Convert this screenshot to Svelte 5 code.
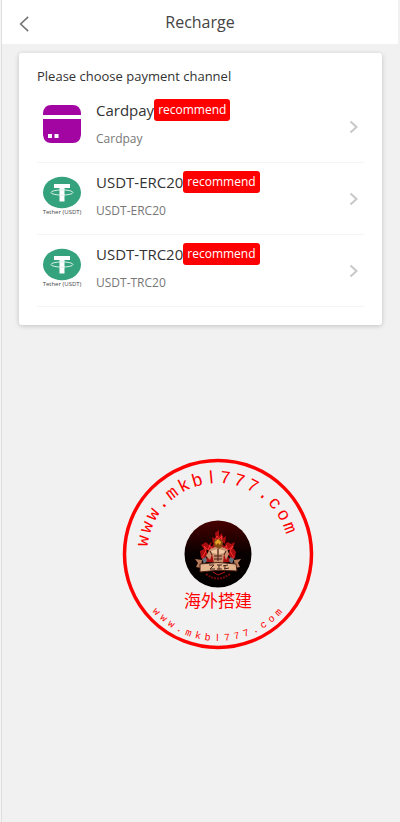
<script>
	const channels = [
		{ name: 'Cardpay', detail: 'Cardpay', icon: 'card' },
		{ name: 'USDT-ERC20', detail: 'USDT-ERC20', icon: 'tether' },
		{ name: 'USDT-TRC20', detail: 'USDT-TRC20', icon: 'tether' }
	];

	const site = [...'www.mkbl777.com'];

	// angles in degrees, measured from the vertical axis of the stamp
	const upper = site.map((char, i) => ({ char, angle: -80 + i * 10.7 }));
	const lower = site.map((char, i) => ({ char, angle: 47 - i * 6.65 }));
</script>

<div class="page">
	<header>
		<button class="back" aria-label="Back">
			<svg viewBox="0 0 12 20" width="12" height="20"><path d="M11 1.500 2 10l9 8.500" /></svg>
		</button>
		<h1>Recharge</h1>
	</header>

	<main>
		<section class="card">
			<h2>Please choose payment channel</h2>
			{#each channels as channel}
				<a class="channel" href="#{channel.name}">
					{#if channel.icon === 'card'}
						<svg class="icon" viewBox="0 0 40 40" width="40" height="40">
							<path d="M1 11V9Q2 1 9 1H31Q38 1 39 9V11Z" fill="#a305a3" />
							<path d="M1 15H39V31Q38 39 31 39H9Q2 39 1 31Z" fill="#a305a3" />
							<path d="M6 30h4v4H6zM12.500 30h4v4h-4z" fill="#fff" />
						</svg>
					{:else}
						<svg class="icon" viewBox="0 0 40 40" width="40" height="40">
							<ellipse cx="20" cy="16.500" rx="19" ry="15.800" fill="#34a27d" />
							<path d="M12 8h16v4h-5.500v13.500h-5V12H12z" fill="#fff" />
							<ellipse cx="20" cy="16.500" rx="11" ry="2.600" fill="none" stroke="#d9f1e9" />
							<text x="20" y="38">Tether (USDT)</text>
						</svg>
					{/if}
					<span class="info">
						<span class="name">{channel.name}<span class="tag">recommend</span></span>
						<span class="detail">{channel.detail}</span>
					</span>
					<svg class="arrow" viewBox="0 0 10 14" width="10" height="14"><path d="m1.500 1.500 6 5.500-6 5.500" /></svg>
				</a>
			{/each}
		</section>

		<svg class="stamp" viewBox="-96 -96 192 192" width="192" height="192">
			<defs>
				<linearGradient id="night" x1="0" y1="0" x2="0" y2="1">
					<stop offset="0" stop-color="#480000" />
					<stop offset=".5" stop-color="#080000" />
					<stop offset="1" stop-color="#000" />
				</linearGradient>
			</defs>
			<circle r="93.500" fill="none" stroke="#f00" stroke-width="3.500" />
			{#each upper as { char, angle }}
				<text class="upper" class:bar={char === 'l'} y="-71" transform="rotate({angle})">{char}</text>
			{/each}
			{#each lower as { char, angle }}
				<text class="lower" class:bar={char === 'l'} y="87" transform="rotate({angle})">{char}</text>
			{/each}

			<circle r="33.500" fill="url(#night)" />
			<!-- flames -->
			<path d="M-17 4-18-3-14-5-17-9-12-12-9-9-7-12-5-10-6-17-2-15-3-21 1-24 1-18 4-21 5-16 8-18 7-10 10-12 13-10 17-12 15-6 18-2 17 4 12 8-12 8Z" fill="#a90d10" />
			<path d="m-15 2 3-5-2-5 4 4 2-5 2 4M15 2l-3-5 3-5-5 4-2-5-2 4M-3-14l2-4 2 3 3-3-1 5M-13 6l-3-4M13 6l3-4" fill="none" stroke="#ff3531" />
			<path d="m-11-4 2 5-3 3M11-4 9 1l3 3M-7-8l2-3M7-8l-2-3" fill="none" stroke="#170202" stroke-width="2" />
			<!-- fighter -->
			<path d="M-8-5-3-7h7l5 2 2 5-3 6-2-6-1 9h-9l-2-9-2 6-4-4Z" fill="#c8906e" />
			<path d="M-7-3-1-5v5l-5-1ZM7-3 1-5v5l5-1Z" fill="#efc7a0" />
			<path d="M0-5V7M-4 2h8M-4 5h8M-8-3l2 4M8-3 6 1" fill="none" stroke="#442016" />
			<path d="M-4-8v-5l2-2h5l2 3-1 5-3 2Z" fill="#8b4a14" />
			<path d="m-3-12 3-3 3 3-1 3-2-2-2 2Z" fill="#e8a525" />
			<path d="m-16 5 4-2 1 4-3 3ZM16 5l-4-2-1 4 3 3Z" fill="#65717a" />
			<!-- ribbon -->
			<path d="m-23 5 7 1-1 8-5-1 2-4ZM23 5l-7 1 1 8 5-1-2-4Z" fill="#b77c5b" />
			<path d="M-18 10Q0 7 18 10L19 17Q0 15-18 18Z" fill="#e5b790" stroke="#4b2116" />
			<path d="M-9 11h5l-4 4h5M-1 11h5m-3 0v4m-2 0h5M7 11v4m-2-3 5-1m-4 4 5-1" fill="none" stroke="#442016" />
			<path d="M-12 20Q0 29 12 20" fill="none" stroke="#76080a" stroke-width="2" stroke-dasharray="2 1" />
			<path d="M-5 18 0 21l7-3" fill="none" stroke="#bb151a" />
			<text class="slogan" y="53">海外搭建</text>
		</svg>
	</main>
</div>

<style>
	:global(body) {
		margin: 0;
		background: #f1f1f1;
	}

	.page {
		box-sizing: border-box;
		min-height: 100vh;
		padding-left: 1px;
		border-left: 1px solid #f5f5f5;
		box-shadow: inset 1px 0 #dfdfdf;
		font-family: "Open Sans", "Noto Sans", "Noto Sans CJK SC", sans-serif;
		color: #333;
	}

	header {
		display: grid;
		grid-template-columns: 44px 1fr 44px;
		align-items: center;
		height: 44px;
		margin-right: 2px;
		background: #fff;
	}

	.back {
		display: flex;
		padding: 3px 17px 0;
		border: 0;
		background: none;
		cursor: pointer;
	}

	.back path {
		fill: none;
		stroke: #777;
		stroke-width: 2;
	}

	h1 {
		margin: 0;
		font-size: 16px;
		font-weight: 400;
		line-height: 24px;
		text-align: center;
		color: #444;
	}

	main {
		display: flex;
		flex-direction: column;
		padding: 9px 18px 0 17px;
	}

	.card {
		padding: 13px 18px 18px;
		border-radius: 3px;
		background: #fff;
		box-shadow: 0 1px 5px rgba(0, 0, 0, 0.2);
	}

	h2 {
		margin: 0 0 5px;
		font-size: 13px;
		font-weight: 400;
		line-height: 20px;
	}

	.channel {
		display: flex;
		align-items: center;
		box-sizing: border-box;
		height: 72px;
		padding: 0 5px;
		border-bottom: 1px solid #f5f5f5;
		color: inherit;
		text-decoration: none;
	}

	.icon {
		flex: none;
		margin: 0 14px 6px 0;
	}

	.icon text {
		font-size: 6px;
		fill: #444;
		text-anchor: middle;
	}

	.info {
		display: flex;
		flex: 1;
		flex-direction: column;
		gap: 7px;
		margin-bottom: 6px;
	}

	.name {
		display: flex;
		align-items: center;
		font-size: 15px;
		line-height: 24px;
	}

	.tag {
		padding: 0 4px;
		border-radius: 3px;
		background: #f00;
		color: #fff;
		font-size: 12px;
		line-height: 22px;
	}

	.detail {
		font-size: 12px;
		line-height: 20px;
		color: #777;
	}

	.arrow path {
		fill: none;
		stroke: #c8c8c8;
		stroke-width: 2;
	}

	.stamp {
		align-self: center;
		margin: 133px 0 0 35px;
	}

	.stamp text {
		fill: #f00;
		text-anchor: middle;
	}

	.upper,
	.lower {
		font-family: "Liberation Mono", "Courier New", monospace;
		font-size: 18px;
	}

	.lower {
		font-size: 10px;
	}

	.bar {
		font-family: "Liberation Sans", Arial, sans-serif;
	}

	.slogan {
		font-family: "Noto Sans CJK SC", sans-serif;
		font-size: 17px;
	}
</style>
